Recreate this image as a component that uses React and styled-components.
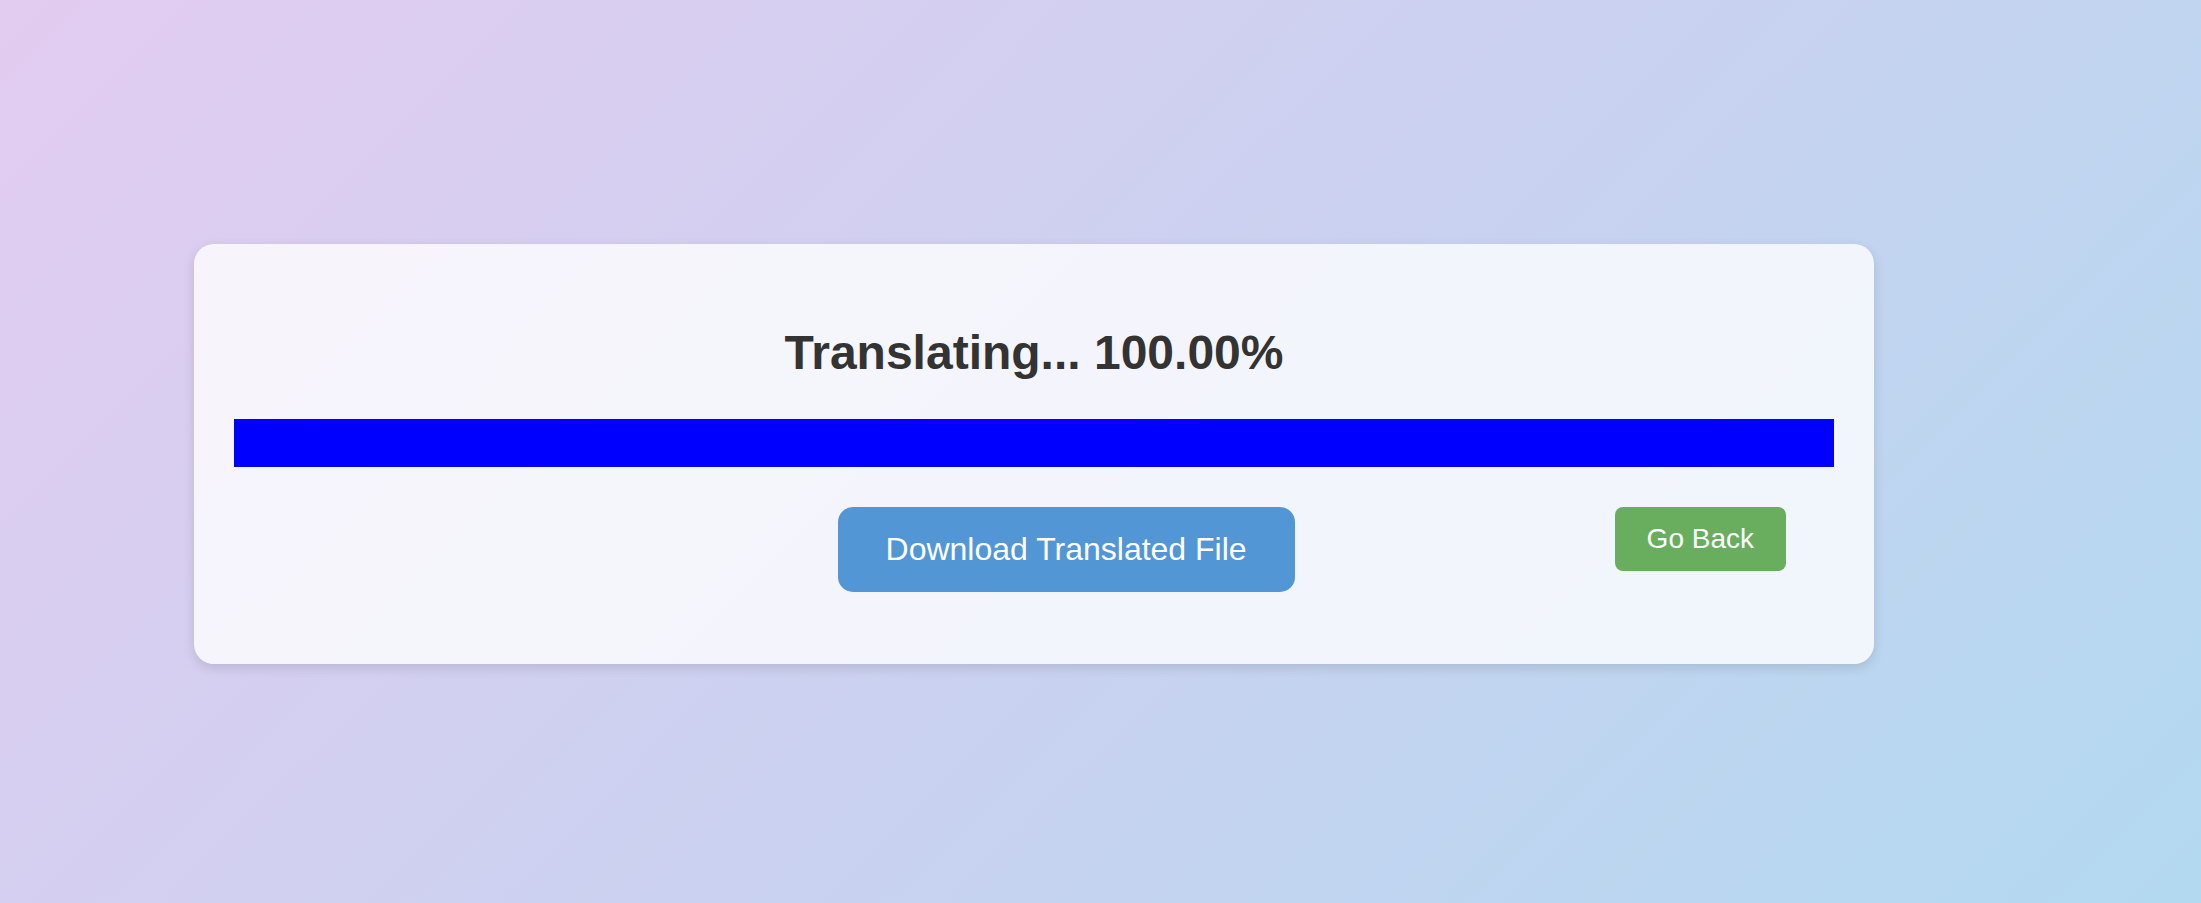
import { createGlobalStyle } from "styled-components";
import styled from "styled-components";

const GlobalStyle = createGlobalStyle`
  html, body {
    margin: 0;
    padding: 0;
  }
  body {
    font-family: "Liberation Sans", Arial, sans-serif;
    background: linear-gradient(135deg, #e2ccf0 0%, #cbd1f0 50%, #b2d9f0 100%);
    min-height: 100vh;
  }
`;

const Page = styled.div`
  min-height: 100vh;
  display: flex;
  align-items: center;
  padding: 5px 0 0 194px;
  box-sizing: border-box;
`;

const Card = styled.div`
  width: 1680px;
  box-sizing: border-box;
  padding: 81px 40px 72px;
  background: rgba(255, 255, 255, 0.78);
  border-radius: 20px;
  box-shadow: 0 4px 12px rgba(0, 0, 0, 0.12);
`;

const Title = styled.h2`
  margin: 0 0 38px;
  font-size: 48px;
  line-height: 56px;
  font-weight: 700;
  color: #333333;
  text-align: center;
`;

const ProgressTrack = styled.div`
  height: 48px;
  background: #e6e6ee;
`;

const ProgressFill = styled.div`
  height: 100%;
  background: #0000ff;
`;

const ButtonRow = styled.div`
  margin-top: 40px;
  display: flex;
  justify-content: flex-end;
  align-items: flex-start;
  gap: 320px;
  padding-right: 48px;
`;

const Button = styled.button`
  font-family: "Liberation Sans", Arial, sans-serif;
  border: none;
  color: #ffffff;
  cursor: pointer;
  background: ${(p) => (p.$variant === "green" ? "#69ad5f" : "#5296d5")};
  font-size: ${(p) => (p.$variant === "green" ? "28px" : "32px")};
  height: ${(p) => (p.$variant === "green" ? "64px" : "85px")};
  padding: ${(p) => (p.$variant === "green" ? "0 32px" : "0 48px")};
  border-radius: ${(p) => (p.$variant === "green" ? "8px" : "15px")};
`;

const App = () => {
  const progress = 100;

  return (
    <>
      <GlobalStyle />
      <Page>
        <Card>
          <Title>Translating... {progress.toFixed(2)}%</Title>
          <ProgressTrack>
            <ProgressFill style={{ width: `${progress}%` }} />
          </ProgressTrack>
          <ButtonRow>
            <Button>Download Translated File</Button>
            <Button $variant="green">Go Back</Button>
          </ButtonRow>
        </Card>
      </Page>
    </>
  );
};

export default App;
